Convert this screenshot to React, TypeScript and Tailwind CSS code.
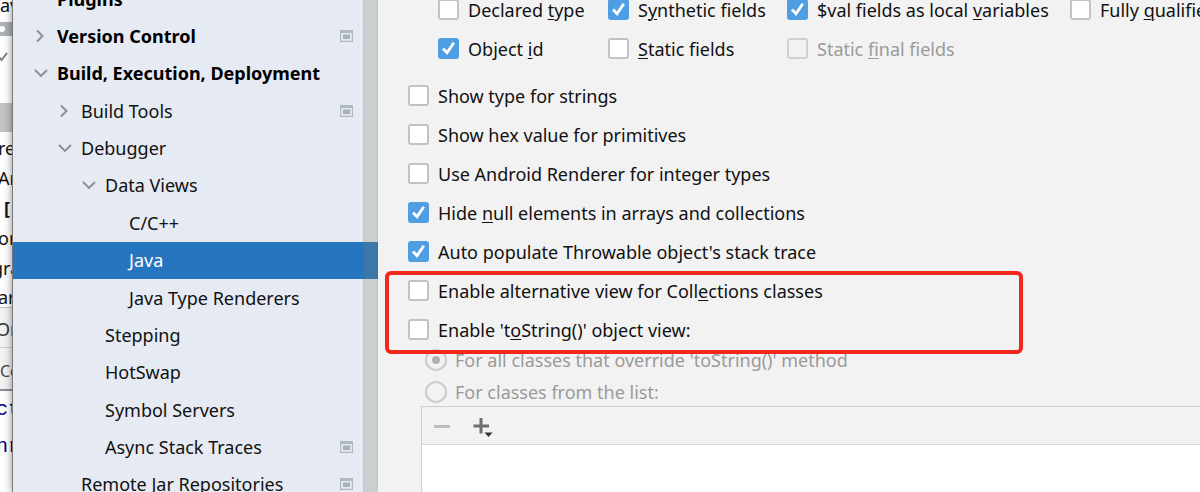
import type { ReactNode } from "react";

type Node = { label: string; depth: number; state?: "open" | "closed"; bold?: boolean; selected?: boolean; project?: boolean };

const nodes: Node[] = [
  { label: "Plugins", depth: 0, bold: true },
  { label: "Version Control", depth: 0, state: "closed", bold: true, project: true },
  { label: "Build, Execution, Deployment", depth: 0, state: "open", bold: true },
  { label: "Build Tools", depth: 1, state: "closed", project: true },
  { label: "Debugger", depth: 1, state: "open" },
  { label: "Data Views", depth: 2, state: "open" },
  { label: "C/C++", depth: 3 },
  { label: "Java", depth: 3, selected: true },
  { label: "Java Type Renderers", depth: 3 },
  { label: "Stepping", depth: 2 },
  { label: "HotSwap", depth: 2 },
  { label: "Symbol Servers", depth: 2 },
  { label: "Async Stack Traces", depth: 2, project: true },
  { label: "Remote Jar Repositories", depth: 1, project: true },
];

const indents = ["pl-5", "pl-11", "pl-[68px]", "pl-[92px]"];

function Chevron({ state }: { state?: "open" | "closed" }) {
  return (
    <svg viewBox="0 0 16 16" className="size-4 shrink-0" fill="none" stroke="#8b8d92" strokeWidth="1.9">
      {state === "closed" && <path d="M4 2.5 L9.5 8 L4 13.5" />}
      {state === "open" && <path d="M2 5 L8 11 L14 5" />}
    </svg>
  );
}

function ProjectIcon() {
  return (
    <svg viewBox="0 0 13 12" className="h-3 w-[13px] shrink-0">
      <path fill="#b0b9be" fillRule="evenodd" d="M0 0H13V12H0ZM1.2 3V10.8H11.8V3Z" />
      <rect x="3" y="4.5" width="7" height="4.5" fill="#a9b1b6" />
    </svg>
  );
}

function Tree() {
  return (
    <nav aria-label="Settings" className="relative w-[365px] shrink-0 bg-[#e6eaf2]">
      <ul className="-mt-5 grid h-[523px] auto-rows-fr">
        {nodes.map((n) => (
          <li key={n.label} className={n.selected ? "bg-[#2675bf] text-white" : ""}>
            <button type="button" className={`flex h-full w-full items-center pr-[25px] text-left ${indents[n.depth]}`}>
              <Chevron state={n.state} />
              <span className={`ml-2 grow whitespace-nowrap ${n.bold ? "font-bold text-black" : ""}`}>{n.label}</span>
              {n.project && <ProjectIcon />}
            </button>
          </li>
        ))}
      </ul>
      <div className="absolute inset-y-0 right-0 w-[15px] border-x border-black/5 bg-[#7f7f6c]/25" />
    </nav>
  );
}

function Check({ children, checked, disabled }: { children: ReactNode; checked?: boolean; disabled?: boolean }) {
  return (
    <label className={`flex h-[39px] items-center gap-[9px] whitespace-nowrap ${disabled ? "text-[#9a9a9a]" : ""}`}>
      <span className="grid size-[21px] shrink-0 place-items-center">
        <input
          type="checkbox"
          defaultChecked={checked}
          disabled={disabled}
          className="peer col-start-1 row-start-1 size-[21px] appearance-none rounded-[3px] border-2 border-[#c2c2c2] bg-white checked:border-[#4f9ee3] checked:bg-[#4f9ee3] disabled:border-[#d0d0d0] disabled:bg-[#f2f2f2]"
        />
        <svg viewBox="0 0 21 21" className="pointer-events-none invisible col-start-1 row-start-1 size-[21px] peer-checked:visible" fill="none" stroke="white" strokeWidth="2.8">
          <path d="M5 10.5 L9 14.7 L15.8 4.8" />
        </svg>
      </span>
      <span>{children}</span>
    </label>
  );
}

function Radio({ children, checked }: { children: ReactNode; checked?: boolean }) {
  return (
    <label className="flex h-[22px] items-center gap-2 whitespace-nowrap text-[#9a9a9a]">
      <span className="grid size-[22px] shrink-0 place-items-center">
        <input type="radio" name="scope" disabled defaultChecked={checked} className="peer col-start-1 row-start-1 size-[22px] appearance-none rounded-full border-2 border-[#cccccc]" />
        <span className="invisible col-start-1 row-start-1 size-2 rounded-full bg-[#b0b0b0] peer-checked:visible" />
      </span>
      <span>{children}</span>
    </label>
  );
}

function U({ children }: { children: ReactNode }) {
  return <span className="underline decoration-1 underline-offset-2">{children}</span>;
}

function Editor() {
  return (
    <aside className="flex w-3 shrink-0 flex-col overflow-hidden whitespace-nowrap bg-white text-[18px]">
      <div className="h-[22px] leading-[10px]">av</div>
      <div className="h-[14px] bg-[#aeb2b4]">
        <svg viewBox="0 0 12 14" className="h-[14px] w-3">
          <circle cx="2" cy="7" r="3" fill="white" />
        </svg>
      </div>
      <div className="h-[67px] pt-4">
        <svg viewBox="0 0 12 10" className="h-[10px] w-3" fill="none" stroke="#777777" strokeWidth="1.8">
          <path d="M-1 5 L1.5 8 L7 1" />
        </svg>
      </div>
      <div className="h-[29px] bg-[#c4c4c4]" />
      <div className="-ml-0.5 h-[30px] leading-[32px]">re</div>
      <div className="-ml-0.5 h-[30px] leading-[32px]">Ar</div>
      <div className="h-[30px] pl-1 font-bold leading-[32px]">[</div>
      <div className="-ml-0.5 h-[30px] leading-[32px]">or</div>
      <div className="-ml-2 h-[30px] leading-[32px]">gra</div>
      <div className="h-[26px] border-b border-[#c4c4c4] leading-[30px]"><span className="-ml-0.5">are</span></div>
      <div className="h-10 border-b border-[#d0d0d0] bg-[#f2f2f2] leading-[42px] text-[#333333]"><span className="-ml-1">On</span></div>
      <div className="h-[43px] border-b-2 border-[#8d8d99] bg-[#f2f2f2] text-base leading-[46px] text-[#444444]">Co</div>
      <div className="-ml-1 h-[38px] font-['Liberation_Mono',monospace] text-xl leading-[38px] text-[#000080]">ct</div>
      <div className="-ml-1 h-[38px] font-['Liberation_Mono',monospace] text-xl leading-[36px] text-[#000080]">nr</div>
      <div className="grow" />
    </aside>
  );
}

export default function App() {
  return (
    <div className="flex h-screen overflow-hidden bg-[#f2f2f2] font-['Noto_Sans','Noto_Sans_CJK_SC',sans-serif] text-[18px] leading-6 text-[#111111]">
      <Editor />
      <div className="relative flex min-w-0 grow border-l border-[#77787c] shadow-[0_0_8px_rgba(0,0,0,0.45)]">
        <Tree />
        <main className="flex min-w-0 grow flex-col overflow-hidden">
          <div className="-mt-[10px] mb-2 ml-[60px] grid shrink-0 grid-cols-[170px_179px_283px_1fr]">
            <Check>Declared <U>t</U>ype</Check>
            <Check checked>S<U>y</U>nthetic fields</Check>
            <Check checked>$val fields as local <U>v</U>ariables</Check>
            <Check>Fully <U>q</U>ualified names</Check>
            <Check checked>Object <U>i</U>d</Check>
            <Check><U>S</U>tatic fields</Check>
            <Check disabled>Static <U>f</U>inal fields</Check>
          </div>
          <div className="ml-[30px] shrink-0">
            <Check>Show type for strings</Check>
            <Check>Show hex value for primitives</Check>
            <Check>Use Android Renderer for integer types</Check>
            <Check checked>Hide <U>n</U>ull elements in arrays and collections</Check>
            <Check checked>Auto populate Throwable object's stack trace</Check>
            <div className="relative">
              <Check>Enable alternative view for Coll<U>e</U>ctions classes</Check>
              <Check>Enable 't<U>o</U>String()' object view:</Check>
              <div className="pointer-events-none absolute -bottom-[5px] -left-[23px] top-0 w-[638px] rounded-md border-4 border-[#f3261b]" />
            </div>
          </div>
          <div className="ml-[47px] flex shrink-0 flex-col gap-[10px]">
            <Radio checked>For all classes that override 'toString()' method</Radio>
            <Radio>For classes from the list:</Radio>
          </div>
          <section className="ml-[43px] mt-[3px] flex grow flex-col border-l border-t border-[#cfcfcf] bg-white">
            <div className="flex h-[38px] shrink-0 items-center gap-5 border-b border-[#d6d6d6] bg-[#f2f2f2] pl-[10px]">
              <button type="button" aria-label="Remove" disabled>
                <svg viewBox="0 0 20 22" className="h-[22px] w-5">
                  <rect x="2" y="10" width="16" height="3" fill="#bcbcbc" />
                </svg>
              </button>
              <button type="button" aria-label="Add">
                <svg viewBox="0 0 22 22" className="size-[22px]">
                  <path d="M1.5 9.5H7.5V3H10.5V9.5H17V12.5H10.5V18.5H7.5V12.5H1.5Z" fill="#6e6e6e" />
                  <path d="M12.5 17.5H20.5L16.5 22Z" fill="#333333" />
                </svg>
              </button>
            </div>
          </section>
        </main>
      </div>
    </div>
  );
}
